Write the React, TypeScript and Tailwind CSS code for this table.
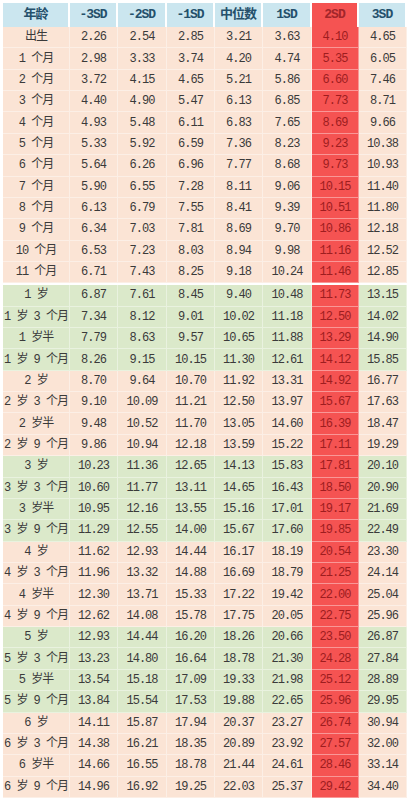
import { FC } from "react";

type Row = [string, string, string, string, string, string, string, string];

const peach = "bg-[#fbe4d5]";
const green = "bg-[#dbe9ca]";

const rows: Row[] = [
  ["出生", "2.26", "2.54", "2.85", "3.21", "3.63", "4.10", "4.65"],
  ["1 个月", "2.98", "3.33", "3.74", "4.20", "4.74", "5.35", "6.05"],
  ["2 个月", "3.72", "4.15", "4.65", "5.21", "5.86", "6.60", "7.46"],
  ["3 个月", "4.40", "4.90", "5.47", "6.13", "6.85", "7.73", "8.71"],
  ["4 个月", "4.93", "5.48", "6.11", "6.83", "7.65", "8.69", "9.66"],
  ["5 个月", "5.33", "5.92", "6.59", "7.36", "8.23", "9.23", "10.38"],
  ["6 个月", "5.64", "6.26", "6.96", "7.77", "8.68", "9.73", "10.93"],
  ["7 个月", "5.90", "6.55", "7.28", "8.11", "9.06", "10.15", "11.40"],
  ["8 个月", "6.13", "6.79", "7.55", "8.41", "9.39", "10.51", "11.80"],
  ["9 个月", "6.34", "7.03", "7.81", "8.69", "9.70", "10.86", "12.18"],
  ["10 个月", "6.53", "7.23", "8.03", "8.94", "9.98", "11.16", "12.52"],
  ["11 个月", "6.71", "7.43", "8.25", "9.18", "10.24", "11.46", "12.85"],
];

const years: Row[] = [
  ["1 岁", "6.87", "7.61", "8.45", "9.40", "10.48", "11.73", "13.15"],
  ["1 岁 3 个月", "7.34", "8.12", "9.01", "10.02", "11.18", "12.50", "14.02"],
  ["1 岁半", "7.79", "8.63", "9.57", "10.65", "11.88", "13.29", "14.90"],
  ["1 岁 9 个月", "8.26", "9.15", "10.15", "11.30", "12.61", "14.12", "15.85"],
  ["2 岁", "8.70", "9.64", "10.70", "11.92", "13.31", "14.92", "16.77"],
  ["2 岁 3 个月", "9.10", "10.09", "11.21", "12.50", "13.97", "15.67", "17.63"],
  ["2 岁半", "9.48", "10.52", "11.70", "13.05", "14.60", "16.39", "18.47"],
  ["2 岁 9 个月", "9.86", "10.94", "12.18", "13.59", "15.22", "17.11", "19.29"],
  ["3 岁", "10.23", "11.36", "12.65", "14.13", "15.83", "17.81", "20.10"],
  ["3 岁 3 个月", "10.60", "11.77", "13.11", "14.65", "16.43", "18.50", "20.90"],
  ["3 岁半", "10.95", "12.16", "13.55", "15.16", "17.01", "19.17", "21.69"],
  ["3 岁 9 个月", "11.29", "12.55", "14.00", "15.67", "17.60", "19.85", "22.49"],
  ["4 岁", "11.62", "12.93", "14.44", "16.17", "18.19", "20.54", "23.30"],
  ["4 岁 3 个月", "11.96", "13.32", "14.88", "16.69", "18.79", "21.25", "24.14"],
  ["4 岁半", "12.30", "13.71", "15.33", "17.22", "19.42", "22.00", "25.04"],
  ["4 岁 9 个月", "12.62", "14.08", "15.78", "17.75", "20.05", "22.75", "25.96"],
  ["5 岁", "12.93", "14.44", "16.20", "18.26", "20.66", "23.50", "26.87"],
  ["5 岁 3 个月", "13.23", "14.80", "16.64", "18.78", "21.30", "24.28", "27.84"],
  ["5 岁半", "13.54", "15.18", "17.09", "19.33", "21.98", "25.12", "28.89"],
  ["5 岁 9 个月", "13.84", "15.54", "17.53", "19.88", "22.65", "25.96", "29.95"],
  ["6 岁", "14.11", "15.87", "17.94", "20.37", "23.27", "26.74", "30.94"],
  ["6 岁 3 个月", "14.38", "16.21", "18.35", "20.89", "23.92", "27.57", "32.00"],
  ["6 岁半", "14.66", "16.55", "18.78", "21.44", "24.61", "28.46", "33.14"],
  ["6 岁 9 个月", "14.96", "16.92", "19.25", "22.03", "25.37", "29.42", "34.40"],
];

const grid = "grid grid-cols-[67px_48px_49px_48px_48px_49px_47px_48px]";
const font = { fontFamily: '"Liberation Mono", "Noto Sans CJK SC", monospace' };

const TableRow: FC<{ row: Row; bg: string }> = ({ row, bg }) => (
  <div className={`${grid} h-[21.36px]`}>
    {row.map((cell, i) => (
      <div
        key={i}
        className={`flex items-center justify-center whitespace-nowrap overflow-hidden border-b border-r border-white/40 tracking-[-1px] ${
          i === 6 ? "bg-[#f55352] text-[#9e1d1f] border-[#f98a87]" : `${bg} text-[#3a3a3a]`
        }`}
      >
        {cell}
      </div>
    ))}
  </div>
);

export default function App() {
  const headers = ["年龄", "-3SD", "-2SD", "-1SD", "中位数", "1SD", "2SD", "3SD"];
  return (
    <div className="bg-white w-[410px] h-[800px] pt-[3px] pl-[3px] text-[12px]" style={font}>
      <div className={`${grid} h-[24px]`}>
        {headers.map((h, i) => (
          <div
            key={h}
            className={`flex items-center justify-center whitespace-nowrap font-bold text-[13px] tracking-[-1px] border-r-2 border-white ${
              i === 6 ? "bg-[#f55352] text-[#a2262a]" : "bg-[#cbe6ef] text-[#24506b]"
            }`}
          >
            {h}
          </div>
        ))}
      </div>
      {rows.map((r) => (
        <TableRow key={r[0]} row={r} bg={peach} />
      ))}
      <div className="h-[2px]" />
      {years.map((r, idx) => (
        <TableRow key={r[0]} row={r} bg={Math.floor(idx / 4) % 2 === 0 ? green : peach} />
      ))}
    </div>
  );
}
